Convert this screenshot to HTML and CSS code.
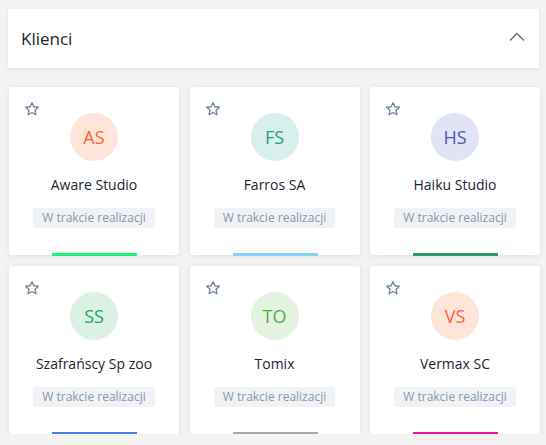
FILE: index.html
```
<!DOCTYPE html>
<html lang="pl">
<head>
<meta charset="utf-8">
<link rel="stylesheet" href="styles.css">
</head>
<body>
<div class="page">
  <div class="panel-head">
    <span class="title">Klienci</span>
    <svg class="chevron" width="16" height="10" viewBox="0 0 16 10"><path d="M1 8.5 L8 1.5 L15 8.5" fill="none" stroke="#5d6b80" stroke-width="1.3"/></svg>
  </div>
  <div class="grid">
    <div class="card">
      <svg class="star" width="16" height="16" viewBox="0 0 24 24"><path d="M12 2.5 L14.9 8.6 L21.5 9.4 L16.6 14 L17.9 20.6 L12 17.3 L6.1 20.6 L7.4 14 L2.5 9.4 L9.1 8.6 Z" fill="none" stroke="#6f82a3" stroke-width="2" stroke-linejoin="round"/></svg>
      <div class="avatar av-orange">AS</div>
      <div class="name">Aware Studio</div>
      <div class="badge">W trakcie realizacji</div>
      <div class="bar bar-green"></div>
    </div>
    <div class="card">
      <svg class="star" width="16" height="16" viewBox="0 0 24 24"><path d="M12 2.5 L14.9 8.6 L21.5 9.4 L16.6 14 L17.9 20.6 L12 17.3 L6.1 20.6 L7.4 14 L2.5 9.4 L9.1 8.6 Z" fill="none" stroke="#6f82a3" stroke-width="2" stroke-linejoin="round"/></svg>
      <div class="avatar av-teal">FS</div>
      <div class="name">Farros SA</div>
      <div class="badge">W trakcie realizacji</div>
      <div class="bar bar-sky"></div>
    </div>
    <div class="card">
      <svg class="star" width="16" height="16" viewBox="0 0 24 24"><path d="M12 2.5 L14.9 8.6 L21.5 9.4 L16.6 14 L17.9 20.6 L12 17.3 L6.1 20.6 L7.4 14 L2.5 9.4 L9.1 8.6 Z" fill="none" stroke="#6f82a3" stroke-width="2" stroke-linejoin="round"/></svg>
      <div class="avatar av-indigo">HS</div>
      <div class="name">Haiku Studio</div>
      <div class="badge">W trakcie realizacji</div>
      <div class="bar bar-dgreen"></div>
    </div>
    <div class="card">
      <svg class="star" width="16" height="16" viewBox="0 0 24 24"><path d="M12 2.5 L14.9 8.6 L21.5 9.4 L16.6 14 L17.9 20.6 L12 17.3 L6.1 20.6 L7.4 14 L2.5 9.4 L9.1 8.6 Z" fill="none" stroke="#6f82a3" stroke-width="2" stroke-linejoin="round"/></svg>
      <div class="avatar av-green">SS</div>
      <div class="name">Szafrańscy Sp zoo</div>
      <div class="badge">W trakcie realizacji</div>
      <div class="bar bar-blue"></div>
    </div>
    <div class="card">
      <svg class="star" width="16" height="16" viewBox="0 0 24 24"><path d="M12 2.5 L14.9 8.6 L21.5 9.4 L16.6 14 L17.9 20.6 L12 17.3 L6.1 20.6 L7.4 14 L2.5 9.4 L9.1 8.6 Z" fill="none" stroke="#6f82a3" stroke-width="2" stroke-linejoin="round"/></svg>
      <div class="avatar av-lime">TO</div>
      <div class="name">Tomix</div>
      <div class="badge">W trakcie realizacji</div>
      <div class="bar bar-gray"></div>
    </div>
    <div class="card">
      <svg class="star" width="16" height="16" viewBox="0 0 24 24"><path d="M12 2.5 L14.9 8.6 L21.5 9.4 L16.6 14 L17.9 20.6 L12 17.3 L6.1 20.6 L7.4 14 L2.5 9.4 L9.1 8.6 Z" fill="none" stroke="#6f82a3" stroke-width="2" stroke-linejoin="round"/></svg>
      <div class="avatar av-orange">VS</div>
      <div class="name">Vermax SC</div>
      <div class="badge">W trakcie realizacji</div>
      <div class="bar bar-magenta"></div>
    </div>
  </div>
</div>
</body>
</html>
```
FILE: styles.css
```
html, body {
  margin: 0;
  padding: 0;
  background: #f3f3f3;
  font-family: "Open Sans", "Noto Sans", sans-serif;
  color: #222;
}
.page {
  padding: 9px 7px 0 8px;
}
.panel-head {
  background: #fff;
  height: 59px;
  display: flex;
  align-items: center;
  justify-content: space-between;
  padding: 0 14px 0 13px;
  box-shadow: 0 1px 3px rgba(0,0,0,0.08);
}
.title {
  font-size: 17px;
  color: #1f2430;
  margin-top: -1px;
}
.chevron {
  margin-top: -3px;
}
.grid {
  margin-top: 19px;
  margin-left: 1px;
  display: grid;
  grid-template-columns: repeat(3, 170px);
  column-gap: 10.5px;
  row-gap: 11px;
}
.card {
  position: relative;
  background: #fff;
  border-radius: 3px;
  height: 168px;
  box-sizing: border-box;
  padding-top: 26px;
  display: flex;
  flex-direction: column;
  align-items: center;
  box-shadow: 0 1px 6px rgba(0,0,0,0.08);
}
.star {
  position: absolute;
  top: 14px;
  left: 15px;
}
.avatar {
  width: 48px;
  height: 48px;
  border-radius: 50%;
  display: flex;
  align-items: center;
  justify-content: center;
  font-size: 18px;
}
.av-orange { background: #ffe4da; color: #fb6334; }
.av-teal { background: #d8efec; color: #1f9c8a; }
.av-indigo { background: #e1e4f5; color: #4b57b5; }
.av-green { background: #dbf1e3; color: #27a25f; }
.av-lime { background: #e3f3df; color: #4dae46; }
.name {
  margin-top: 14px;
  font-size: 14px;
  line-height: 20px;
  color: #1f2430;
}
.badge {
  margin-top: 13px;
  height: 20px;
  line-height: 20px;
  padding: 0 9px;
  background: #f0f2f5;
  border-radius: 3px;
  font-size: 12px;
  color: #8797ad;
}
.bar {
  position: absolute;
  bottom: -1px;
  left: 43px;
  width: 85px;
  height: 3px;
}
.bar-green { background: #14f57a; }
.bar-sky { background: #80d4f8; }
.bar-dgreen { background: #2e9964; }
.bar-blue { background: #4b7bf3; }
.bar-gray { background: #a8a8a8; }
.bar-magenta { background: #f012a8; }
```
